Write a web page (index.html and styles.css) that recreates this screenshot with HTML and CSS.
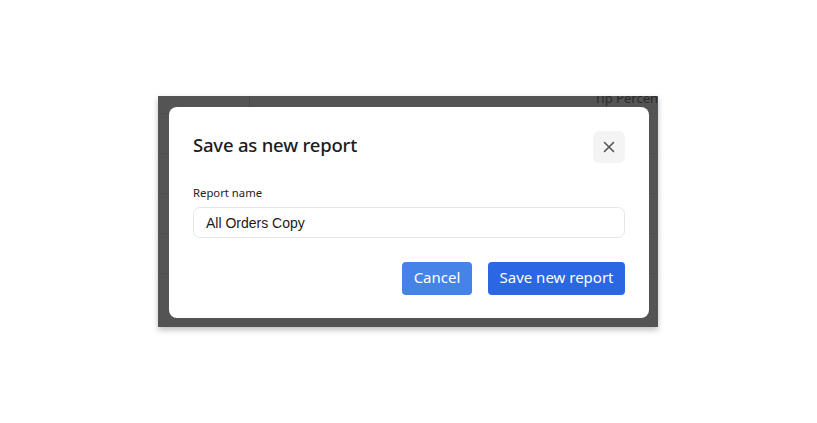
FILE: index.html
```html
<!DOCTYPE html>
<html>
<head>
<meta charset="utf-8">
<link rel="stylesheet" href="styles.css">
</head>
<body>
<div class="page">
  <div class="frame">
    <div class="bg-table">
      <span class="bg-head">Tip Percen</span>
      <div class="bg-vline"></div>
      <div class="bg-row r1"></div>
      <div class="bg-row r2"></div>
      <div class="bg-row r3"></div>
      <div class="bg-row r4"></div>
      <div class="bg-row r5"></div>
    </div>
    <div class="modal">
      <div class="modal-header">
        <h2 class="modal-title">Save as new report</h2>
        <button class="close-btn" aria-label="Close">
          <svg width="12" height="12" viewBox="0 0 12 12"><path d="M1.5 1.5 L10.5 10.5 M10.5 1.5 L1.5 10.5" stroke="#555" stroke-width="1.6" stroke-linecap="round"/></svg>
        </button>
      </div>
      <label class="field-label">Report name</label>
      <div class="input">All Orders Copy</div>
      <div class="actions">
        <button class="btn btn-cancel">Cancel</button>
        <button class="btn btn-primary">Save new report</button>
      </div>
    </div>
  </div>
</div>
</body>
</html>
```
FILE: styles.css
```css
html, body {
  margin: 0;
  padding: 0;
  background: #ffffff;
}
.page {
  width: 817px;
  height: 423px;
  padding: 96px 0 0 158px;
  box-sizing: border-box;
}
.frame {
  position: relative;
  width: 500px;
  height: 231px;
  background: #545454;
  box-shadow: 0 3px 6px rgba(0,0,0,0.25);
  padding: 11px 9px 9px 11px;
  box-sizing: border-box;
  overflow: hidden;
}
.bg-table {
  position: absolute;
  inset: 0;
}
.bg-head {
  position: absolute;
  right: 0;
  top: -7px;
  font-family: "Noto Sans", sans-serif;
  font-size: 13px;
  color: #2a2a2a;
  white-space: nowrap;
}
.bg-vline {
  position: absolute;
  left: 91px;
  top: 0;
  width: 1px;
  height: 11px;
  background: #4a4a4a;
}
.bg-row {
  position: absolute;
  left: 0;
  right: 0;
  height: 1px;
  background: #4e4e4e;
}
.r1 { top: 17px; }
.r2 { top: 57px; }
.r3 { top: 97px; }
.r4 { top: 137px; }
.r5 { top: 177px; }
.modal {
  position: relative;
  background: #ffffff;
  border-radius: 8px;
  width: 480px;
  height: 211px;
  box-sizing: border-box;
  padding: 24px 24px 23px 24px;
  display: flex;
  flex-direction: column;
}
.modal-header {
  display: flex;
  justify-content: space-between;
  align-items: center;
  height: 32px;
}
.modal-title {
  margin: 0 0 5px 0;
  font-family: "Noto Sans", sans-serif;
  font-size: 18.5px;
  font-weight: 500;
  color: #1c1c1c;
  letter-spacing: -0.2px;
}
.close-btn {
  width: 32px;
  height: 32px;
  border: none;
  border-radius: 6px;
  background: #f4f4f4;
  display: flex;
  align-items: center;
  justify-content: center;
  padding: 0;
}
.field-label {
  margin-top: 22px;
  font-family: "Noto Sans", sans-serif;
  font-size: 11.3px;
  line-height: 16px;
  color: #222;
}
.input {
  margin-top: 6px;
  height: 31px;
  box-sizing: border-box;
  border: 1px solid #e6e6e6;
  border-radius: 7px;
  padding: 0 12px;
  display: flex;
  align-items: center;
  font-family: "Liberation Sans", Arial, sans-serif;
  font-size: 14px;
  color: #1a1a1a;
}
.actions {
  margin-top: 24px;
  display: flex;
  justify-content: flex-end;
  gap: 16px;
}
.btn {
  height: 33px;
  border: none;
  border-radius: 4px;
  color: #ffffff;
  font-family: "Noto Sans", sans-serif;
  font-size: 15px;
  padding: 0 0 3px 0;
  white-space: nowrap;
}
.btn-cancel {
  width: 70px;
  background: #4683e8;
}
.btn-primary {
  width: 137px;
  background: #2c67e3;
}
```
